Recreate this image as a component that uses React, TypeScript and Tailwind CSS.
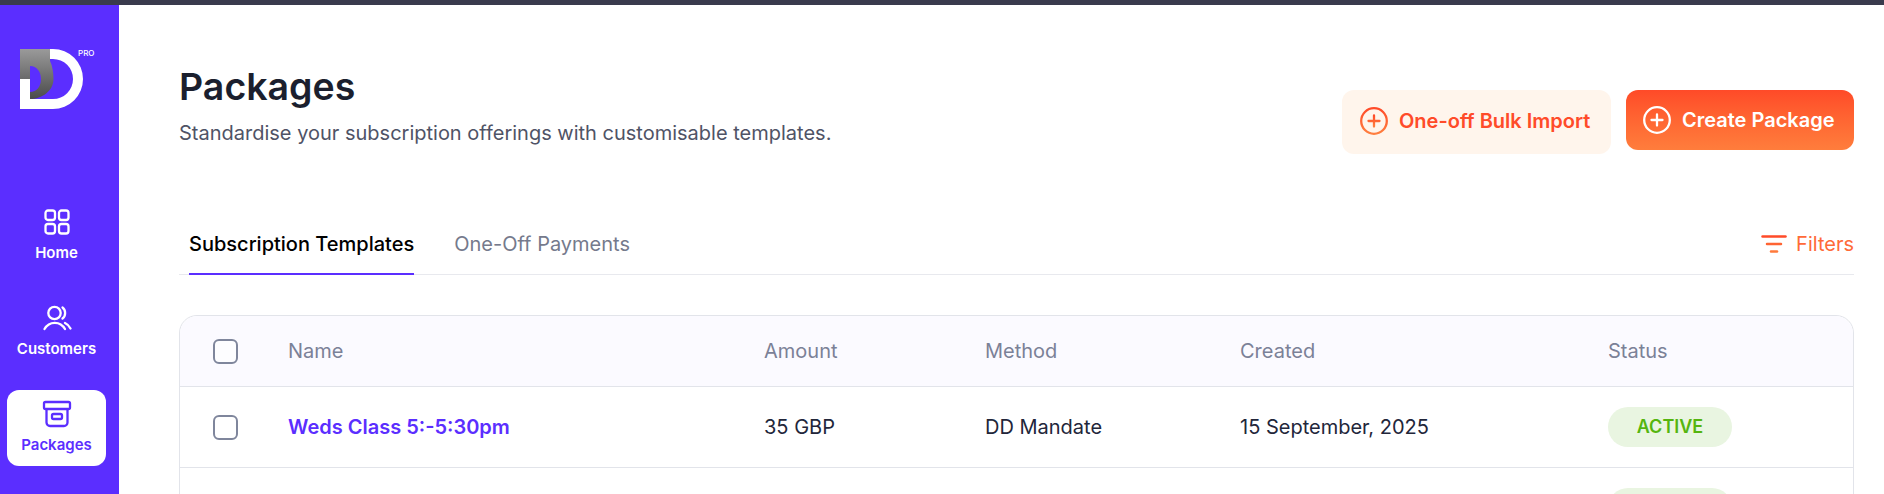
const inter = { fontFamily: "Inter, sans-serif" };

function PlusCircle({ id, stops }: { id: string; stops: [string, string] }) {
  return (
    <svg width="30" height="30" viewBox="0 0 30 30" fill="none">
      <defs>
        <linearGradient id={id} x1="0" y1="0" x2="0" y2="1">
          <stop offset="0" stopColor={stops[0]} />
          <stop offset="1" stopColor={stops[1]} />
        </linearGradient>
      </defs>
      <circle cx="15" cy="15" r="12.8" stroke={`url(#${id})`} strokeWidth="2.300" />
      <path d="M15 9.5v11M9.5 15h11" stroke={`url(#${id})`} strokeWidth="2.300" strokeLinecap="round" />
    </svg>
  );
}

function Logo() {
  return (
    <div className="relative h-[60px] w-[76px]">
      <svg width="64" height="60" viewBox="0 0 64 60">
        <defs>
          <linearGradient id="logoGray" x1="0" y1="0" x2="0" y2="1">
            <stop offset="0" stopColor="#9a9a9a" />
            <stop offset="1" stopColor="#4b4b4b" />
          </linearGradient>
        </defs>
        <path
          fillRule="evenodd"
          fill="#fff"
          d="M0 0H33A30 30 0 0 1 33 60H0ZM10 10V50H33A20 20 0 0 0 33 10Z"
        />
        <path
          fill="url(#logoGray)"
          d="M0 0H30V12C32.500 17 33.500 24 33.500 30C33.500 42 22 50 10 50V43C17 43 21 37 21 30C21 23 17 17 10 17V30H0Z"
        />
      </svg>
      <span className="absolute left-[58px] top-[-1px] text-[8px] font-medium leading-[10px] text-white">PRO</span>
    </div>
  );
}

function HomeIcon() {
  return (
    <svg width="28" height="28" viewBox="0 0 28 28" fill="none" stroke="currentColor" strokeWidth="2.300">
      <rect x="2.500" y="2.500" width="9.500" height="9.500" rx="2.500" />
      <rect x="16" y="2.500" width="9.500" height="9.500" rx="2.500" />
      <rect x="2.500" y="16" width="9.500" height="9.500" rx="2.500" />
      <rect x="16" y="16" width="9.500" height="9.500" rx="2.500" />
    </svg>
  );
}

function CustomersIcon() {
  return (
    <svg width="30" height="28" viewBox="0 0 30 28" fill="none" stroke="currentColor" strokeWidth="2.300" strokeLinecap="round">
      <circle cx="12.500" cy="9" r="6.200" />
      <path d="M20.500 3.500C24 6 24 12 20.500 14.500" />
      <path d="M2.500 25C5 20.500 9 18.800 12.800 18.800C16.600 18.800 20.500 20.500 23 25" />
      <path d="M23 19C25.200 20 27.300 22 28.500 24.500" />
    </svg>
  );
}

function PackagesIcon() {
  return (
    <svg width="30" height="28" viewBox="0 0 30 28" fill="none" stroke="currentColor" strokeWidth="2.300" strokeLinejoin="round">
      <rect x="2" y="2" width="26" height="7" rx="1.500" />
      <path d="M4.500 9V22.500A3.500 3.500 0 0 0 8 26H22A3.500 3.500 0 0 0 25.500 22.500V9" />
      <rect x="10" y="14" width="10" height="5" rx="1.500" />
    </svg>
  );
}

function FilterIcon() {
  return (
    <svg width="26" height="20" viewBox="0 0 26 20" fill="none" strokeWidth="2.500" strokeLinecap="round">
      <path d="M1.500 2.500h23" stroke="#ff4b29" />
      <path d="M6 10h14" stroke="#ff6433" />
      <path d="M10 17.500h6" stroke="#ff7a3c" />
    </svg>
  );
}

function NavItem({ label, active, children }: { label: string; active?: boolean; children: React.ReactNode }) {
  return (
    <a
      className={`flex h-[76px] w-[99px] flex-col items-center rounded-xl pt-[10px] text-[15px] font-semibold ${
        active ? "bg-white text-[#5b2eff]" : "text-white"
      }`}
    >
      {children}
      <span className="mt-[7px] leading-5">{label}</span>
    </a>
  );
}

function Checkbox() {
  return <span className="block h-[25px] w-[25px] rounded-[6px] border-2 border-[#7f869c] bg-white/60" />;
}

const rowGrid = "grid grid-cols-[75px_476px_221px_255px_368px_1fr] items-center pl-[33px]";

export default function App() {
  return (
    <div className="flex h-[494px] flex-col overflow-hidden bg-white" style={inter}>
      <div className="h-[5px] shrink-0 bg-[#3a3b4d]" />
      <div className="flex min-h-0 flex-1">
        <aside className="flex w-[119px] shrink-0 flex-col bg-[#5b2eff]">
          <div className="mb-[89px] ml-5 mt-[44px]">
            <Logo />
          </div>
          <div className="ml-[7px] flex flex-col gap-5">
            <NavItem label="Home">
              <HomeIcon />
            </NavItem>
            <NavItem label="Customers">
              <CustomersIcon />
            </NavItem>
            <NavItem label="Packages" active>
              <PackagesIcon />
            </NavItem>
          </div>
        </aside>

        <main className="min-w-0 flex-1 pl-[60px] pr-[30px]">
          <header className="flex items-start justify-between pt-[57px]">
            <div>
              <h1 className="text-[37.5px] font-semibold leading-[50px] text-[#1b1f2e]">Packages</h1>
              <p className="mt-[7px] text-xl leading-7 text-[#4f5366]">
                Standardise your subscription offerings with customisable templates.
              </p>
            </div>
            <div className="mt-7 flex items-start gap-[15px]">
              <button className="flex h-16 w-[269px] items-center gap-[10px] rounded-xl bg-[#fff5ec] pb-[2px] pl-[17px] text-xl font-semibold text-[#ff4b29]">
                <PlusCircle id="plusOrange" stops={["#ff4b29", "#ff7f3f"]} />
                One-off Bulk Import
              </button>
              <button className="flex h-[60px] w-[228px] items-center gap-[10px] rounded-xl bg-gradient-to-b from-[#ff4a28] to-[#ff7d3c] pl-4 text-xl font-semibold text-white">
                <PlusCircle id="plusWhite" stops={["#ffffff", "#ffffff"]} />
                Create Package
              </button>
            </div>
          </header>

          <nav className="mt-[59px] flex h-[62px] items-start justify-between border-b border-[#e8e9ee] pl-[10px] pt-[17px] text-xl">
            <div className="flex gap-10">
              <span className="h-[45px] border-b-2 border-[#5b2eff] font-medium leading-7 text-black">
                Subscription Templates
              </span>
              <span className="leading-7 text-[#757a8c]">One-Off Payments</span>
            </div>
            <button className="flex items-center gap-[9px] leading-7 text-[#ff6a38]">
              <FilterIcon />
              Filters
            </button>
          </nav>

          <section className="mt-10 rounded-t-[18px] border border-[#e2e4ea]">
            <div className={`${rowGrid} h-[70px] rounded-t-[18px] bg-[#fbfaff] text-xl text-[#7b8197]`}>
              <Checkbox />
              <span>Name</span>
              <span>Amount</span>
              <span>Method</span>
              <span>Created</span>
              <span>Status</span>
            </div>
            <div className={`${rowGrid} h-[81px] border-t border-[#e2e4ea] text-xl text-[#22263a]`}>
              <Checkbox />
              <a className="font-semibold text-[#5b2eff]">Weds Class 5:-5:30pm</a>
              <span>35 GBP</span>
              <span>DD Mandate</span>
              <span>15 September, 2025</span>
              <span className="flex h-10 w-[124px] items-center justify-center rounded-full bg-[#e9f5e1] text-lg font-semibold text-[#55b50f]">
                ACTIVE
              </span>
            </div>
            <div className={`${rowGrid} h-[81px] border-t border-[#e2e4ea]`}>
              <span />
              <span />
              <span />
              <span />
              <span />
              <span className="h-10 w-[124px] rounded-full bg-[#e9f5e1]" />
            </div>
          </section>
        </main>
      </div>
    </div>
  );
}
